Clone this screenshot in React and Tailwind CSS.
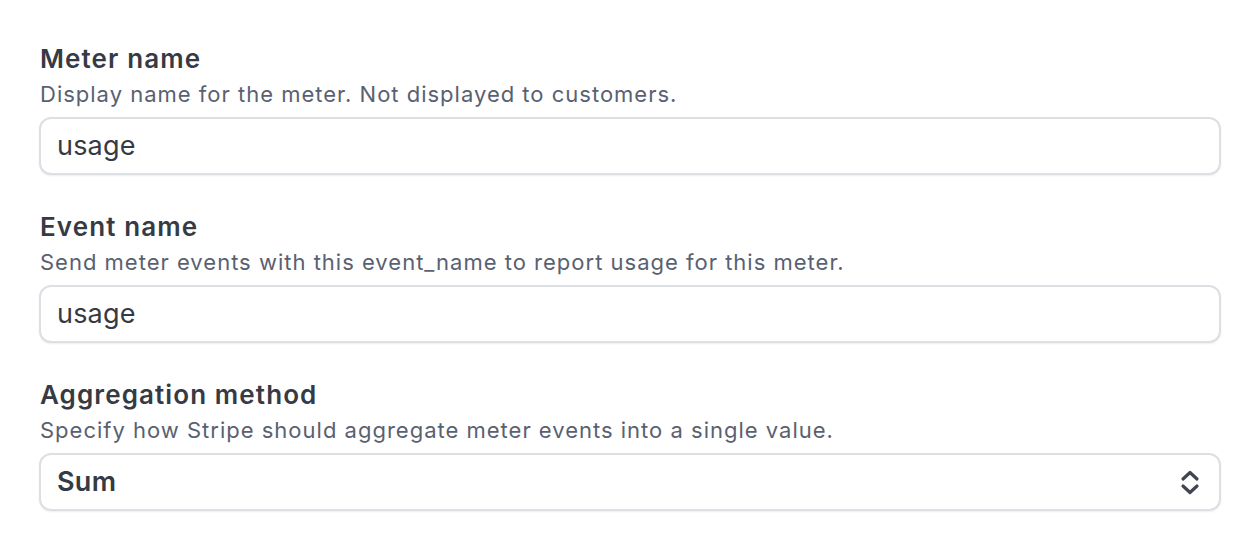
import React from 'react';

function Field({ label, hint, children }) {
  return (
    <div>
      <div className="pl-px text-[26px] leading-[32px] font-semibold tracking-[1.1px] text-[#353a44]">{label}</div>
      <div className="pl-px text-[22px] leading-[30px] tracking-[1px] text-[#596171] mt-[4px]">{hint}</div>
      <div className="mt-[8px]">{children}</div>
    </div>
  );
}

function TextBox({ value }) {
  return (
    <div className="h-[58px] rounded-[12px] border-2 border-[#dcdfe4] bg-white shadow-[0_1px_2px_rgba(0,0,0,0.07)] flex items-center px-[16px]">
      <span className="text-[27px] tracking-[0.2px] text-[#353a44]">{value}</span>
    </div>
  );
}

function SelectBox({ value }) {
  return (
    <div className="h-[58px] rounded-[12px] border-2 border-[#dcdfe4] bg-white shadow-[0_1px_2px_rgba(0,0,0,0.07)] flex items-center justify-between pl-[16px] pr-[19px]">
      <span className="text-[27px] font-semibold tracking-[0.3px] text-[#353a44]">{value}</span>
      <svg width="20" height="27" viewBox="0 0 20 27" fill="none" stroke="#414552" strokeWidth="3.2" strokeLinecap="round" strokeLinejoin="round">
        <path d="M3 10 L10 3.5 L17 10" />
        <path d="M3 17 L10 23.5 L17 17" />
      </svg>
    </div>
  );
}

export default function App() {
  return (
    <div className="w-[1258px] h-[536px] bg-white pl-[39px] pr-[37px] pt-[43px]" style={{ fontFamily: 'Inter, "Noto Sans", sans-serif' }}>
      <div className="flex flex-col gap-[36px]">
        <Field label="Meter name" hint="Display name for the meter. Not displayed to customers.">
          <TextBox value="usage" />
        </Field>
        <Field label="Event name" hint="Send meter events with this event_name to report usage for this meter.">
          <TextBox value="usage" />
        </Field>
        <Field label="Aggregation method" hint="Specify how Stripe should aggregate meter events into a single value.">
          <SelectBox value="Sum" />
        </Field>
      </div>
    </div>
  );
}
